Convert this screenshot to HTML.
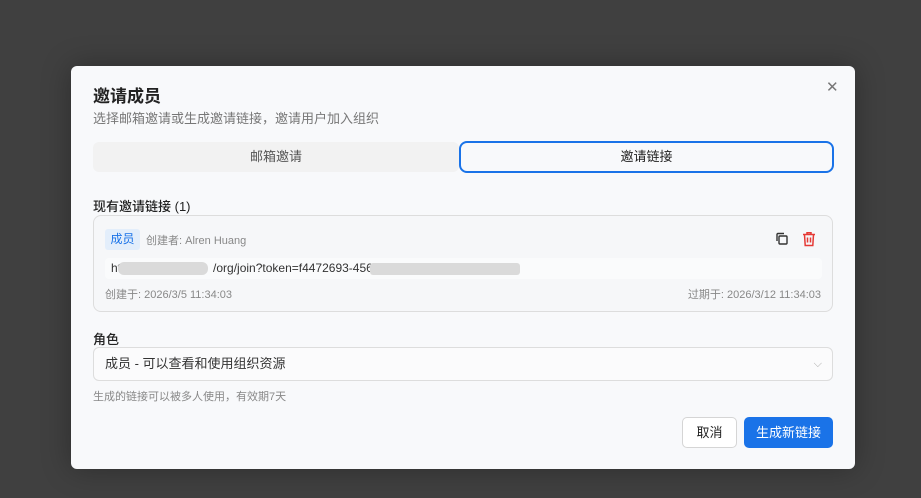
<!DOCTYPE html>
<html><head><meta charset="utf-8"><style>
*{box-sizing:border-box;margin:0;padding:0}
body{width:921px;height:498px;background:#404040;font-family:"Liberation Sans","Noto Sans CJK SC",sans-serif;position:relative;overflow:hidden}
.m{position:absolute;left:71px;top:66px;width:784px;height:403px;background:#f8f9fb;border-radius:6px;box-shadow:0 0 30px rgba(0,0,0,.3)}
.abs{position:absolute}
.t{left:22px;top:16px;font-size:17px;font-weight:bold;color:#222}
.s{left:22px;top:42px;font-size:13px;color:#777}
.x{left:755px;top:12px;font-size:15px;color:#777}
.tab1{left:22px;top:76px;width:366px;height:30px;background:#f2f2f2;border-radius:6px;font-size:13px;color:#555;text-align:center;line-height:30px}
.tab2{left:388px;top:75px;width:375px;height:32px;border:2px solid #1a73e8;border-radius:8px;font-size:13px;color:#222;text-align:center;line-height:28px;background:#f8f9fb}
.lbl{font-size:13px;color:#222;font-weight:500}
.card{left:22px;top:149px;width:740px;height:97px;border:1px solid #ddd;border-radius:8px;background:#f6f7f9}
.tag{left:11px;top:13px;width:35px;height:21px;background:#e3eefb;color:#1a73e8;font-size:12px;line-height:21px;text-align:center;border-radius:3px}
.url{left:11px;top:42px;width:717px;height:21px;background:#fafbfc;border-radius:4px;font-size:12px;color:#333;line-height:21px;padding-left:6px}
.g{color:#888;font-size:11px}
.sel{left:22px;top:281px;width:740px;height:34px;border:1px solid #ddd;border-radius:6px;background:#fbfbfc;font-size:13px;color:#333;line-height:32px;padding-left:11px}
.b1{left:611px;top:351px;width:55px;height:31px;border:1px solid #d5d5d5;border-radius:5px;background:#fff;font-size:13px;text-align:center;line-height:29px;color:#222}
.b2{left:673px;top:351px;width:89px;height:31px;border-radius:5px;background:#1a73e8;color:#fff;font-size:13px;text-align:center;line-height:31px}
.blur{background:#dadada;border-radius:3px}
</style></head><body>
<div class="m">
<div class="abs t">邀请成员</div>
<div class="abs s">选择邮箱邀请或生成邀请链接，邀请用户加入组织</div>
<div class="abs x">✕</div>
<div class="abs tab1">邮箱邀请</div>
<div class="abs tab2">邀请链接</div>
<div class="abs lbl" style="left:22px;top:130px">现有邀请链接 (1)</div>
<div class="abs card">
<div class="abs tag">成员</div>
<div class="abs g" style="left:52px;top:16px">创建者: Alren Huang</div>
<svg class="abs" style="left:680px;top:15px" width="16" height="16" viewBox="0 0 16 16" fill="none" stroke="#333" stroke-width="1.4"><rect x="5" y="5" width="8" height="8" rx="1"/><path d="M3 10V3.5C3 3 3.3 2.5 4 2.5H10"/></svg>
<svg class="abs" style="left:708px;top:15px" width="14" height="16" viewBox="0 0 14 16" fill="none" stroke="#e53935" stroke-width="1.5"><path d="M1 3.5H13M5 3.5V1.8H9V3.5M2.5 3.5L3.2 14.5H10.8L11.5 3.5M5.5 6.5V11.5M8.5 6.5V11.5"/></svg>
<div class="abs url">ht<span style="display:inline-block;width:92px"></span>/org/join?token=f4472693-456</div>
<div class="abs blur" style="left:24px;top:46px;width:90px;height:13px;border-radius:6px"></div>
<div class="abs blur" style="left:276px;top:47px;width:150px;height:12px"></div>
<div class="abs g" style="left:11px;top:70px">创建于: 2026/3/5 11:34:03</div>
<div class="abs g" style="right:11px;top:70px">过期于: 2026/3/12 11:34:03</div>
</div>
<div class="abs lbl" style="left:22px;top:263px">角色</div>
<div class="abs sel">成员 - 可以查看和使用组织资源<span style="position:absolute;right:10px;top:0;color:#aaa;font-size:11px">⌵</span></div>
<div class="abs g" style="left:22px;top:322px">生成的链接可以被多人使用，有效期7天</div>
<div class="abs b1">取消</div>
<div class="abs b2">生成新链接</div>
</div>
</body></html>
